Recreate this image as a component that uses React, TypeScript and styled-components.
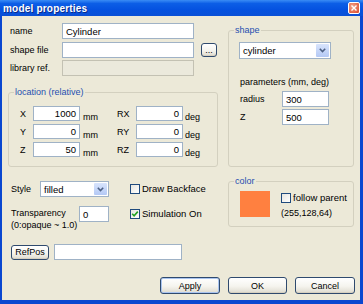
import * as React from "react";
import styled, { createGlobalStyle } from "styled-components";

const GlobalStyle = createGlobalStyle`
  html, body {
    margin: 0;
    padding: 0;
    background: #ffffff;
  }
  #root {
    width: 363px;
    height: 304px;
  }
`;

const Window = styled.div`
  width: 363px;
  height: 304px;
  box-sizing: border-box;
  display: flex;
  flex-direction: column;
  background: #0b4fd8;
  border-left: 2px solid #0a47d0;
  border-right: 3px solid #0a47d0;
  border-bottom: 4px solid #0a47d0;
  font-family: "Liberation Sans", Arial, sans-serif;
  font-size: 9px;
  color: #000;
`;

const TitleBar = styled.div`
  height: 16px;
  margin: 0 -3px 0 -2px;
  padding: 0 3px;
  display: flex;
  align-items: center;
  justify-content: space-between;
  background: linear-gradient(#3a8cf5 0%, #0c5ee6 22%, #0552e0 60%, #0a50d6 100%);
`;

const TitleText = styled.span`
  color: #ffffff;
  font-weight: bold;
  font-size: 10px;
  letter-spacing: 0.2px;
  text-shadow: 1px 1px 0 #0a2c8a;
`;

const CloseButton = styled.div`
  width: 10px;
  height: 10px;
  border: 1px solid #ffffff;
  border-radius: 2px;
  background: radial-gradient(circle at 35% 35%, #f3a58b, #d9472a);
  display: flex;
  align-items: center;
  justify-content: center;
`;

const Body = styled.div`
  flex: 1;
  background: #ece9d8;
  padding: 7px 5px 0 6px;
  box-sizing: border-box;
  display: flex;
  flex-direction: column;
`;

const Section = styled.div<{ $top?: number }>`
  display: grid;
  grid-template-columns: 210px 126px;
  column-gap: 10px;
  margin-top: ${(p) => p.$top ?? 0}px;
`;

const Column = styled.div<{ $padTop?: number; $padLeft?: number }>`
  display: flex;
  flex-direction: column;
  padding-top: ${(p) => p.$padTop ?? 0}px;
  padding-left: ${(p) => p.$padLeft ?? 0}px;
`;

const FieldGrid = styled.div`
  display: grid;
  grid-template-columns: 52px 132px 23px;
  grid-auto-rows: 16px;
  row-gap: 2.5px;
  margin-left: 2px;
  align-items: center;
`;

const BrowseCell = styled.div`
  display: flex;
  justify-content: flex-end;
`;

const Label = styled.span`
  white-space: nowrap;
  line-height: 12px;
`;

const TextInput = styled.div<{ $w?: number; $h?: number; $align?: "left" | "right"; $disabled?: boolean }>`
  box-sizing: border-box;
  width: ${(p) => (p.$w ? `${p.$w}px` : "100%")};
  height: ${(p) => p.$h ?? 16}px;
  border: 1px solid ${(p) => (p.$disabled ? "#c3c1b3" : "#9fb2c6")};
  background: ${(p) => (p.$disabled ? "#ebe9dc" : "#ffffff")};
  display: flex;
  align-items: center;
  justify-content: ${(p) => (p.$align === "right" ? "flex-end" : "flex-start")};
  padding: 0 3px 0 3px;
  font-size: 9.5px;
  white-space: nowrap;
`;

const Button = styled.button<{ $w: number; $h: number; $default?: boolean }>`
  box-sizing: border-box;
  width: ${(p) => p.$w}px;
  height: ${(p) => p.$h}px;
  padding: 0;
  margin: 0;
  border: 1px solid #2f4a6e;
  border-radius: 3px;
  background: linear-gradient(#ffffff 0%, #f5f4ee 55%, #dedbcf 100%);
  box-shadow: ${(p) => (p.$default ? "inset 0 0 0 1px #a9c4ef" : "inset 0 -1px 0 #d6d0c0")};
  font-family: "Liberation Sans", Arial, sans-serif;
  font-size: 9px;
  color: #000;
  display: flex;
  align-items: center;
  justify-content: center;
`;

const GroupBox = styled.fieldset<{ $self?: string; $top?: number }>`
  margin: ${(p) => p.$top ?? 0}px 0 0 0;
  padding: 0;
  min-width: 0;
  border: 1px solid #d3d0bf;
  border-radius: 3px;
  align-self: ${(p) => p.$self ?? "stretch"};
`;

const GroupTitle = styled.legend`
  margin-left: 5px;
  padding: 0 1px;
  font-size: 9px;
  line-height: 11px;
  color: #1f4fb0;
`;

const GroupContent = styled.div<{ $pad: string }>`
  padding: ${(p) => p.$pad};
`;

const LocationGrid = styled.div`
  display: grid;
  grid-template-columns: 13px 47px 37px 19px 47px auto;
  grid-auto-rows: 15px;
  row-gap: 3px;
`;

const AxisLabel = styled.span`
  display: flex;
  align-items: center;
  line-height: 12px;
`;

const Unit = styled.span<{ $pad: number }>`
  padding-left: ${(p) => p.$pad}px;
  padding-top: 5px;
  line-height: 12px;
`;

const SelectBox = styled.div<{ $w: number; $h: number }>`
  box-sizing: border-box;
  width: ${(p) => p.$w}px;
  height: ${(p) => p.$h}px;
  border: 1px solid #9fb2c6;
  background: #ffffff;
  display: flex;
  align-items: stretch;
`;

const SelectValue = styled.span`
  flex: 1;
  display: flex;
  align-items: center;
  padding-left: 3px;
  font-size: 9.5px;
`;

const SelectArrow = styled.span`
  width: 13px;
  margin: 1px;
  border-radius: 1px;
  background: linear-gradient(#d8e4fc, #b4c9f5);
  display: flex;
  align-items: center;
  justify-content: center;
`;

const ParamsHeading = styled.div`
  margin-top: 17px;
  margin-left: 1px;
  line-height: 12px;
  font-size: 9px;
`;

const ParamGrid = styled.div`
  display: grid;
  grid-template-columns: 42px 47px;
  grid-auto-rows: 16px;
  row-gap: 2px;
  margin-top: 3px;
  margin-left: 1px;
  align-items: center;
`;

const OptionRow = styled.div<{ $top: number }>`
  display: flex;
  align-items: flex-start;
  margin-top: ${(p) => p.$top}px;
`;

const OptionLeft = styled.div`
  width: 119px;
  display: flex;
  align-items: flex-start;
`;

const OptionLabel = styled.span<{ $w: number; $pad?: number }>`
  width: ${(p) => p.$w}px;
  padding-top: ${(p) => p.$pad ?? 0}px;
  line-height: 12px;
  flex-shrink: 0;
`;

const CheckRow = styled.label<{ $pad?: number }>`
  display: flex;
  align-items: center;
  gap: 2px;
  padding-top: ${(p) => p.$pad ?? 0}px;
  font-size: 9.5px;
  line-height: 12px;
`;

const CheckBox = styled.span`
  box-sizing: border-box;
  width: 10px;
  height: 10px;
  border: 1px solid #1f4a7d;
  background: linear-gradient(135deg, #e6e5df, #ffffff);
  display: flex;
  align-items: center;
  justify-content: center;
  flex-shrink: 0;
`;

const RefRow = styled.div`
  display: flex;
  align-items: center;
  gap: 5px;
  margin-top: 13px;
`;

const ColorContent = styled.div`
  display: flex;
  gap: 11px;
  padding: 4px 0 7px 11px;
`;

const Swatch = styled.div<{ $color: string }>`
  width: 30px;
  height: 26px;
  background: ${(p) => p.$color};
  flex-shrink: 0;
`;

const ColorInfo = styled.div`
  display: flex;
  flex-direction: column;
  gap: 3px;
  padding-top: 1px;
`;

const ButtonRow = styled.div`
  display: flex;
  justify-content: flex-end;
  gap: 8px;
  margin-top: 17px;
`;

const Chevron = () => (
  <svg width="7" height="5" viewBox="0 0 7 5">
    <path d="M0.8 0.8 L3.5 3.5 L6.2 0.8" fill="none" stroke="#4d6185" strokeWidth="1.6" />
  </svg>
);

const Select = ({ value, w, h }: { value: string; w: number; h: number }) => (
  <SelectBox $w={w} $h={h}>
    <SelectValue>{value}</SelectValue>
    <SelectArrow>
      <Chevron />
    </SelectArrow>
  </SelectBox>
);

const Check = ({ checked }: { checked?: boolean }) => (
  <CheckBox>
    {checked && (
      <svg width="8" height="8" viewBox="0 0 8 8">
        <path d="M1.2 3.8 L3.1 5.8 L6.8 1.6" fill="none" stroke="#21a121" strokeWidth="1.6" />
      </svg>
    )}
  </CheckBox>
);

const location = [
  { axis: "X", value: "1000", rot: "RX" },
  { axis: "Y", value: "0", rot: "RY" },
  { axis: "Z", value: "50", rot: "RZ" },
];

export default function App() {
  return (
    <>
      <GlobalStyle />
      <Window>
        <TitleBar>
          <TitleText>model properties</TitleText>
          <CloseButton>
            <svg width="6" height="6" viewBox="0 0 6 6">
              <path d="M0.5 0.5 L5.5 5.5 M5.5 0.5 L0.5 5.5" stroke="#ffffff" strokeWidth="1.4" />
            </svg>
          </CloseButton>
        </TitleBar>
        <Body>
          <Section>
            <Column>
              <FieldGrid>
                <Label>name</Label>
                <TextInput>Cylinder</TextInput>
                <span />
                <Label>shape file</Label>
                <TextInput />
                <BrowseCell>
                  <Button $w={16} $h={14}>...</Button>
                </BrowseCell>
                <Label>library ref.</Label>
                <TextInput $disabled />
                <span />
              </FieldGrid>
              <GroupBox $top={11}>
                <GroupTitle>location (relative)</GroupTitle>
                <GroupContent $pad="8px 0 9px 11px">
                  <LocationGrid>
                    {location.map((row) => (
                      <React.Fragment key={row.axis}>
                        <AxisLabel>{row.axis}</AxisLabel>
                        <TextInput $h={15} $align="right">{row.value}</TextInput>
                        <Unit $pad={3}>mm</Unit>
                        <AxisLabel>{row.rot}</AxisLabel>
                        <TextInput $h={15} $align="right">0</TextInput>
                        <Unit $pad={2}>deg</Unit>
                      </React.Fragment>
                    ))}
                  </LocationGrid>
                </GroupContent>
              </GroupBox>
            </Column>
            <GroupBox $top={2}>
              <GroupTitle>shape</GroupTitle>
              <GroupContent $pad="6px 0 0 10px">
                <Select value="cylinder" w={92} h={17} />
                <ParamsHeading>parameters (mm, deg)</ParamsHeading>
                <ParamGrid>
                  <Label>radius</Label>
                  <TextInput>300</TextInput>
                  <Label>Z</Label>
                  <TextInput>500</TextInput>
                </ParamGrid>
              </GroupContent>
            </GroupBox>
          </Section>
          <Section $top={9}>
            <Column $padTop={5} $padLeft={3}>
              <OptionRow $top={0}>
                <OptionLeft>
                  <OptionLabel $w={29} $pad={2}>Style</OptionLabel>
                  <Select value="filled" w={69} h={16} />
                </OptionLeft>
                <CheckRow $pad={2}>
                  <Check />
                  Draw Backface
                </CheckRow>
              </OptionRow>
              <OptionRow $top={9}>
                <OptionLeft>
                  <OptionLabel $w={68} $pad={1}>
                    Transparency
                    <br />
                    (0:opaque ~ 1.0)
                  </OptionLabel>
                  <TextInput $w={30}>0</TextInput>
                </OptionLeft>
                <CheckRow $pad={2}>
                  <Check checked />
                  Simulation On
                </CheckRow>
              </OptionRow>
              <RefRow>
                <Button $w={38} $h={15}>RefPos</Button>
                <TextInput $w={128} $h={16} />
              </RefRow>
            </Column>
            <GroupBox $self="start">
              <GroupTitle>color</GroupTitle>
              <ColorContent>
                <Swatch $color="#ff8040" />
                <ColorInfo>
                  <CheckRow>
                    <Check />
                    follow parent
                  </CheckRow>
                  <Label>(255,128,64)</Label>
                </ColorInfo>
              </ColorContent>
            </GroupBox>
          </Section>
          <ButtonRow>
            <Button $w={60} $h={17} $default>Apply</Button>
            <Button $w={59} $h={17}>OK</Button>
            <Button $w={60} $h={17}>Cancel</Button>
          </ButtonRow>
        </Body>
      </Window>
    </>
  );
}
